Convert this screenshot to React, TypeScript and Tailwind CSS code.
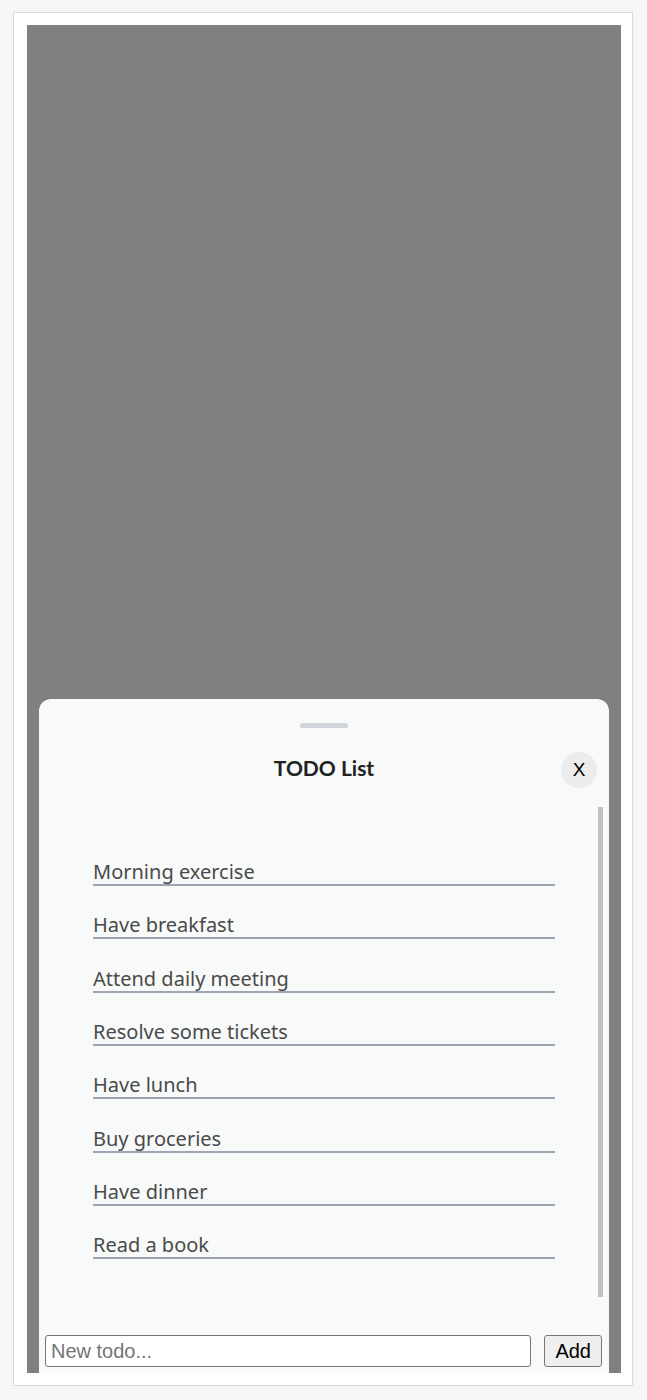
const TODOS = [
  "Morning exercise",
  "Have breakfast",
  "Attend daily meeting",
  "Resolve some tickets",
  "Have lunch",
  "Buy groceries",
  "Have dinner",
  "Read a book",
]

export default function App() {
  return (
    <div className="min-h-screen bg-[#f7f7f7] pt-[12px] pl-[13px]">
      <div className="w-[620px] border border-[#d9d9d9] bg-white pt-[12px] pl-[13px] pr-[11px] pb-[12px] shadow-[0_0_8px_rgba(0,0,0,0.04)]">
        <div className="flex h-[1348px] flex-col justify-end bg-[#808080] px-[12px]">
          {/* bottom sheet */}
          <div className="flex h-[674px] flex-col rounded-t-[12px] bg-[#f8f9f9]">
            <div className="mx-auto mt-[24px] h-[5px] w-[48px] rounded-full bg-[#d1d5db]" />

            <div className="mt-[24px] grid grid-cols-[1fr_auto_1fr] items-center">
              <div />
              <h2 className="-mt-[4px] text-[21px] font-bold text-[#222] [font-family:Lato,'Open_Sans',sans-serif]">
                TODO List
              </h2>
              <button className="mr-[12px] h-[36px] w-[36px] justify-self-end rounded-full bg-[#ececec] text-[19px] text-black [font-family:'Liberation_Sans',Arial,sans-serif]">
                X
              </button>
            </div>

            <div className="mt-[19px] flex h-[490px] pr-[6px]">
              <ul className="flex-1 pl-[54px] pr-[43px] pt-[52px] [font-family:'Noto_Sans','Open_Sans',sans-serif]">
                {TODOS.map((t) => (
                  <li
                    key={t}
                    className="mb-[26.33px] border-b-2 border-[#9ea4b4] text-[20px] leading-[25px] text-[#4a4a4a]"
                  >
                    {t}
                  </li>
                ))}
              </ul>
              <div className="w-[5px] bg-[#c1c1c1]" />
            </div>

            <div className="mt-auto flex items-center gap-[13px] pl-[6px] pr-[7px] pb-[6px] [font-family:'Liberation_Sans',Arial,sans-serif]">
              <input
                placeholder="New todo..."
                className="h-[32px] flex-1 rounded-[3px] border border-[#767676] bg-white px-[5px] text-[20px] text-black placeholder:text-[#757575] outline-none"
              />
              <button className="h-[32px] rounded-[3px] border border-[#767676] bg-[#efefef] px-[10px] text-[20px] text-black">
                Add
              </button>
            </div>
          </div>
        </div>
      </div>
    </div>
  )
}
